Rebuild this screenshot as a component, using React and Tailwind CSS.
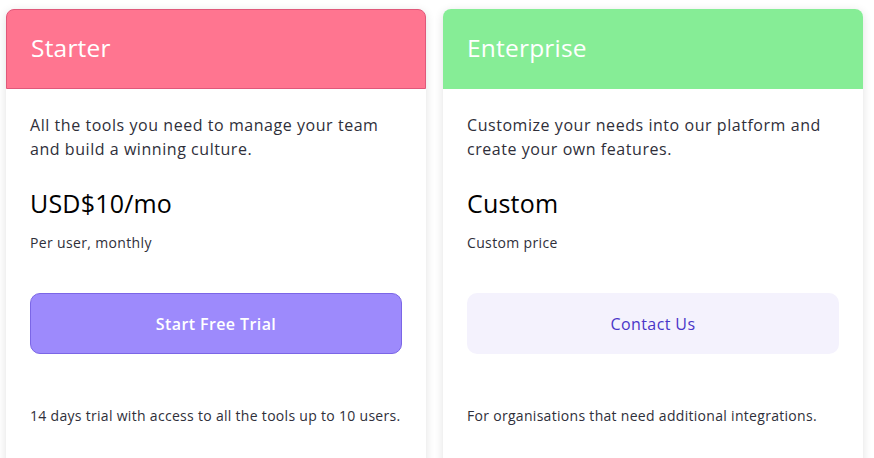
import React from 'react';

const plans = [
  {
    name: 'Starter',
    header: 'bg-[#ff7590] border border-[#e0587a]',
    desc: 'All the tools you need to manage your team and build a winning culture.',
    price: 'USD$10/mo',
    sub: 'Per user, monthly',
    cta: 'Start Free Trial',
    ctaClass: 'bg-[#9d8afc] border border-[#7b66e6] text-white font-semibold',
    note: '14 days trial with access to all the tools up to 10 users.',
  },
  {
    name: 'Enterprise',
    header: 'bg-[#86ed96]',
    desc: 'Customize your needs into our platform and create your own features.',
    price: 'Custom',
    sub: 'Custom price',
    cta: 'Contact Us',
    ctaClass: 'bg-[#f4f2fd] text-[#4a36c8] font-medium',
    note: 'For organisations that need additional integrations.',
  },
];

const PlanCard = ({ plan }) => (
  <div className="w-[420px] bg-white rounded-t-lg shadow-[0_2px_10px_rgba(0,0,0,0.12)]">
    <div className={`${plan.header} h-[80px] rounded-t-lg flex items-center px-6`}>
      <h2 className="text-white text-[24.5px] tracking-[0.2px] pb-[2px]">{plan.name}</h2>
    </div>
    <div className="px-6 pt-6 pb-10">
      <p className="text-[16px] leading-6 tracking-[0.55px] text-[#2f2f3a]">{plan.desc}</p>
      <p className="mt-[26px] text-[25px] leading-8 tracking-[0.2px] text-black">{plan.price}</p>
      <p className="mt-[14px] text-[14px] leading-5 tracking-[0.35px] text-[#2f2f3a]">{plan.sub}</p>
      <button className={`${plan.ctaClass} mt-10 w-full h-[61px] rounded-[10px] text-[16px] tracking-[0.4px]`}>
        {plan.cta}
      </button>
      <p className="mt-[52px] whitespace-nowrap text-[14px] leading-5 tracking-[0.3px] text-[#2f2f3a]">{plan.note}</p>
    </div>
  </div>
);

export default function App() {
  return (
    <div className="h-screen bg-white pt-[9px] pl-[6px] overflow-hidden" style={{ fontFamily: '"Open Sans", "Noto Sans", sans-serif' }}>
      <div className="flex gap-[17px]">
        {plans.map((p) => (
          <PlanCard key={p.name} plan={p} />
        ))}
      </div>
    </div>
  );
}
